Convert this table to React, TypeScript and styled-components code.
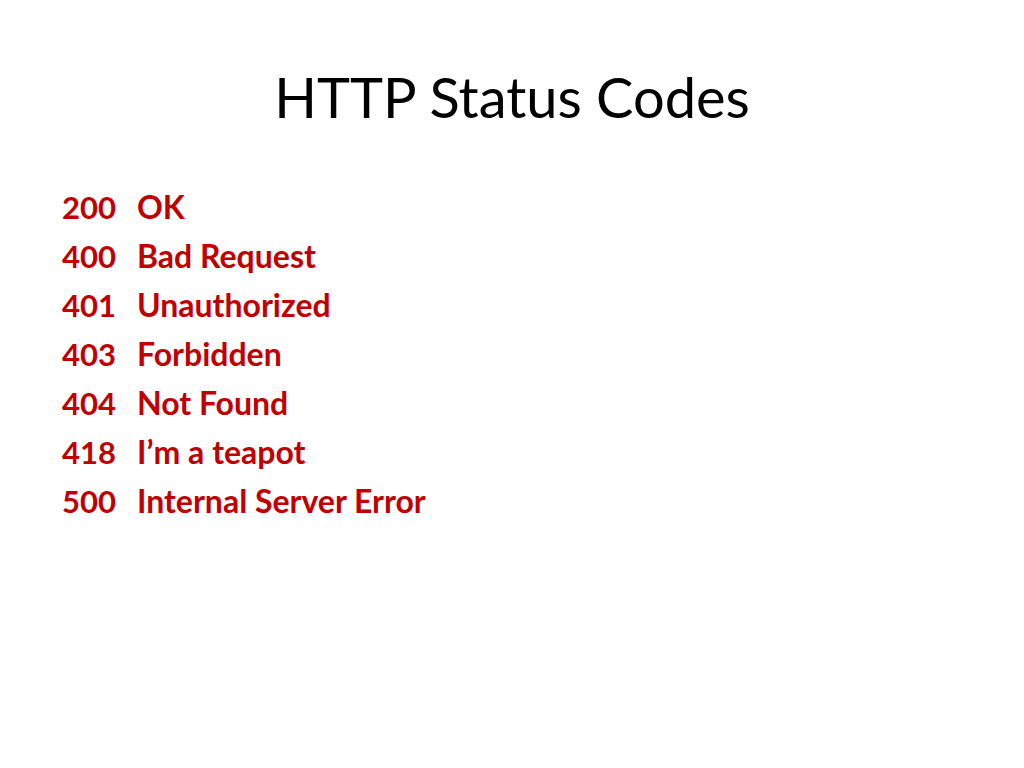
import styled, { createGlobalStyle } from "styled-components"

const GlobalStyle = createGlobalStyle`
    html, body {
        margin: 0;
        padding: 0;
        background: #ffffff;
    }
`

const codes: [string, string][] = [
    ["200", "OK"],
    ["400", "Bad Request"],
    ["401", "Unauthorized"],
    ["403", "Forbidden"],
    ["404", "Not Found"],
    ["418", "I’m a teapot"],
    ["500", "Internal Server Error"],
]

export default function App() {
    return (
        <Slide>
            <GlobalStyle />
            <Title>HTTP Status Codes</Title>
            <CodeList>
                {codes.map(([code, label]) => (
                    <CodeRow key={code}>
                        <Code>{code}</Code>
                        <Label>{label}</Label>
                    </CodeRow>
                ))}
            </CodeList>
        </Slide>
    )
}

const Slide = styled.div`
    width: 1024px;
    height: 768px;
    background: #ffffff;
    display: flex;
    flex-direction: column;
    font-family: Lato, "Open Sans", sans-serif;
`

const Title = styled.h1`
    margin: 0;
    padding-top: 65px;
    text-align: center;
    font-size: 56px;
    font-weight: 400;
    line-height: 64px;
    color: #000000;
`

const CodeList = styled.div`
    display: flex;
    flex-direction: column;
    padding: 53px 0 0 62px;
`

const CodeRow = styled.div`
    display: grid;
    grid-template-columns: 75px auto;
    align-items: baseline;
    height: 49px;
    line-height: 49px;
    font-weight: 700;
    color: #c00000;
`

const Code = styled.span`
    font-size: 31px;
`

const Label = styled.span`
    font-size: 32px;
`
